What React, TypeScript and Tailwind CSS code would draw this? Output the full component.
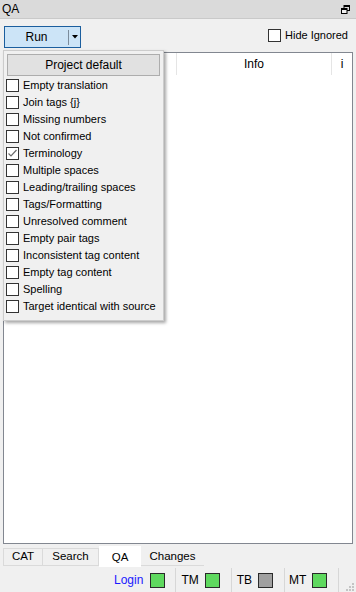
import React from "react";

const items: { label: string; checked?: boolean }[] = [
  { label: "Empty translation" },
  { label: "Join tags {j}" },
  { label: "Missing numbers" },
  { label: "Not confirmed" },
  { label: "Terminology", checked: true },
  { label: "Multiple spaces" },
  { label: "Leading/trailing spaces" },
  { label: "Tags/Formatting" },
  { label: "Unresolved comment" },
  { label: "Empty pair tags" },
  { label: "Inconsistent tag content" },
  { label: "Empty tag content" },
  { label: "Spelling" },
  { label: "Target identical with source" },
];

function Box({ checked }: { checked?: boolean }) {
  return (
    <div className="w-[13px] h-[13px] border border-[#333333] bg-white flex items-center justify-center shrink-0">
      {checked && (
        <svg width="11" height="11" viewBox="0 0 11 11">
          <path d="M1.5 5.5 L4 8 L9.5 2" fill="none" stroke="#6b6b6b" strokeWidth="1.2" />
        </svg>
      )}
    </div>
  );
}

function Square({ color }: { color: string }) {
  return <div className="w-[15px] h-[15px] border border-[#2a2a2a]" style={{ background: color }} />;
}

function Sep() {
  return <div className="w-px h-[24px] bg-[#d7d7d7] self-end" />;
}

export default function App() {
  return (
    <div className="w-[356px] h-[592px] bg-[#f0f0f0] flex flex-col relative overflow-hidden font-['Liberation_Sans',Arial,sans-serif] text-[11px] text-black">
      {/* Title bar */}
      <div className="h-[19px] shrink-0 bg-[#dadada] border-b border-[#c9c9c9] flex items-center justify-between pl-[2px] pr-[5px]">
        <span className="text-[12px] leading-none">QA</span>
        <svg width="9" height="9" viewBox="0 0 9 9" className="mr-[1px]">
          <rect x="3" y="0.5" width="5.5" height="5" fill="none" stroke="#000" strokeWidth="1" />
          <rect x="3" y="0" width="6" height="2" fill="#000" />
          <rect x="0.5" y="3.5" width="5.5" height="5" fill="#f0f0f0" stroke="#000" strokeWidth="1" />
          <rect x="0" y="3" width="6" height="2" fill="#000" />
        </svg>
      </div>

      {/* Toolbar */}
      <div className="h-[33px] shrink-0 flex items-start justify-between pt-[7px] pl-[4px] pr-[8px]">
        <div className="w-[77px] h-[22px] border border-[#1b5e9e] bg-[#cce4f7] flex items-center">
          <div className="flex-1 text-center text-[12px] leading-none">Run</div>
          <div className="w-px h-[15px] bg-[#7b8c9c]" />
          <div className="w-[11px] flex items-center justify-center">
            <svg width="6" height="4" viewBox="0 0 6 4">
              <path d="M0 0 H6 L3 3.5 Z" fill="#000" />
            </svg>
          </div>
        </div>
        <div className="flex items-center gap-[4px] mt-[3px]">
          <Box />
          <span className="text-[11px] leading-none">Hide Ignored</span>
        </div>
      </div>

      {/* Table */}
      <div className="flex-1 mx-[3px] border border-[#828790] bg-white flex flex-col">
        <div className="h-[22px] flex shrink-0">
          <div className="w-[173px] border-r border-[#e5e5e5]" />
          <div className="w-[155px] border-r border-[#e5e5e5] flex items-center justify-center text-[12px]">Info</div>
          <div className="flex-1 flex items-center justify-center text-[12px]">i</div>
        </div>
      </div>

      {/* Tabs */}
      <div className="h-[24px] shrink-0 flex items-start pl-[3px] pt-[2px] text-[11.5px]">
        <div className="w-[40px] h-[18px] mt-[2px] border border-[#dadada] flex items-center justify-center">CAT</div>
        <div className="w-[56px] h-[18px] mt-[2px] border-y border-r border-[#dadada] flex items-center justify-center">Search</div>
        <div className="w-[42px] h-[21px] bg-white flex items-center justify-center pt-[2px]">QA</div>
        <div className="w-[63px] h-[18px] mt-[2px] border-b border-[#dadada] flex items-center justify-center">Changes</div>
      </div>

      {/* Status bar */}
      <div className="h-[24px] shrink-0 flex items-center text-[12px] relative">
        <div className="flex items-center ml-[114px]">
          <span className="text-[#1a1aff]">Login</span>
          <div className="ml-[7px]"><Square color="#5fd95f" /></div>
        </div>
        <div className="ml-[10px] h-full flex items-end"><Sep /></div>
        <div className="flex items-center ml-[5px]">
          <span>TM</span>
          <div className="ml-[6px]"><Square color="#5fd95f" /></div>
        </div>
        <div className="ml-[11px] h-full flex items-end"><Sep /></div>
        <div className="flex items-center ml-[5px]">
          <span>TB</span>
          <div className="ml-[6px]"><Square color="#a0a0a0" /></div>
        </div>
        <div className="ml-[11px] h-full flex items-end"><Sep /></div>
        <div className="flex items-center ml-[4px]">
          <span>MT</span>
          <div className="ml-[6px]"><Square color="#5fd95f" /></div>
        </div>
        <div className="ml-[11px] h-full flex items-end"><Sep /></div>
        <svg width="8" height="8" viewBox="0 0 8 8" className="absolute right-[2px] bottom-[1px]">
          <rect x="6" y="0" width="2" height="2" fill="#c4c4c4" />
          <rect x="3" y="3" width="2" height="2" fill="#c4c4c4" />
          <rect x="6" y="3" width="2" height="2" fill="#c4c4c4" />
          <rect x="0" y="6" width="2" height="2" fill="#c4c4c4" />
          <rect x="3" y="6" width="2" height="2" fill="#c4c4c4" />
          <rect x="6" y="6" width="2" height="2" fill="#c4c4c4" />
        </svg>
      </div>

      {/* Dropdown menu */}
      <div className="absolute left-[3px] top-[50px] w-[161px] bg-[#f0f0f0] border border-[#cccccc] shadow-[2px_2px_3px_rgba(0,0,0,0.35)] pt-[3px] pb-[5px]">
        <div className="mx-[3px] h-[22px] bg-[#e1e1e1] border border-[#adadad] flex items-center justify-center text-[12px]">
          Project default
        </div>
        <div className="mt-[1px] flex flex-col">
          {items.map((it) => (
            <div key={it.label} className="h-[17px] flex items-center pl-[2px] gap-[4px]">
              <Box checked={it.checked} />
              <span className="text-[11px] leading-none whitespace-nowrap">{it.label}</span>
            </div>
          ))}
        </div>
      </div>
    </div>
  );
}
